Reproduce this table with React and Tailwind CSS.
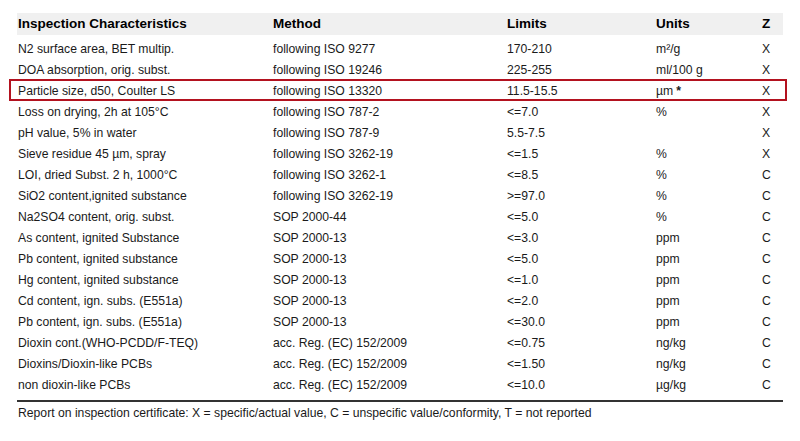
import React from 'react';

const rows = [
  ['N2 surface area, BET multip.', 'following ISO 9277', '170-210', 'm²/g', 'X'],
  ['DOA absorption, orig. subst.', 'following ISO 19246', '225-255', 'ml/100 g', 'X'],
  ['Particle size, d50, Coulter LS', 'following ISO 13320', '11.5-15.5', 'µm', 'X', true],
  ['Loss on drying, 2h at 105°C', 'following ISO 787-2', '<=7.0', '%', 'X'],
  ['pH value, 5% in water', 'following ISO 787-9', '5.5-7.5', '', 'X'],
  ['Sieve residue 45 µm, spray', 'following ISO 3262-19', '<=1.5', '%', 'X'],
  ['LOI, dried Subst. 2 h, 1000°C', 'following ISO 3262-1', '<=8.5', '%', 'C'],
  ['SiO2 content,ignited substance', 'following ISO 3262-19', '>=97.0', '%', 'C'],
  ['Na2SO4 content, orig. subst.', 'SOP 2000-44', '<=5.0', '%', 'C'],
  ['As content, ignited Substance', 'SOP 2000-13', '<=3.0', 'ppm', 'C'],
  ['Pb content, ignited substance', 'SOP 2000-13', '<=5.0', 'ppm', 'C'],
  ['Hg content, ignited substance', 'SOP 2000-13', '<=1.0', 'ppm', 'C'],
  ['Cd content, ign. subs. (E551a)', 'SOP 2000-13', '<=2.0', 'ppm', 'C'],
  ['Pb content, ign. subs. (E551a)', 'SOP 2000-13', '<=30.0', 'ppm', 'C'],
  ['Dioxin cont.(WHO-PCDD/F-TEQ)', 'acc. Reg. (EC) 152/2009', '<=0.75', 'ng/kg', 'C'],
  ['Dioxins/Dioxin-like PCBs', 'acc. Reg. (EC) 152/2009', '<=1.50', 'ng/kg', 'C'],
  ['non dioxin-like PCBs', 'acc. Reg. (EC) 152/2009', '<=10.0', 'µg/kg', 'C'],
];

const cols = 'grid grid-cols-[255px_234px_149px_106px_1fr] pl-[1px]';

const App = () => {
  return (
    <div className="w-[800px] h-[441px] bg-white pt-[13px] text-[#1a1a1a] font-['Liberation_Sans',Arial,sans-serif] overflow-hidden">
      <div className="ml-[17px] w-[766px]">
        {/* Header */}
        <div className={`${cols} h-[22px] items-center bg-[#f0f0f0] text-[13.5px] font-bold text-black`}>
          <div>Inspection Characteristics</div>
          <div>Method</div>
          <div>Limits</div>
          <div>Units</div>
          <div>Z</div>
        </div>

        {/* Rows */}
        <div className="mt-[4px]">
          {rows.map((r, i) => (
            <div key={i} className={`${cols} relative h-[21px] items-center text-[12.2px]`}>
              <div>{r[0]}</div>
              <div>{r[1]}</div>
              <div>{r[2]}</div>
              <div>
                {r[3]}
                {r[5] && <span className="ml-[3px] font-bold">*</span>}
              </div>
              <div>{r[4]}</div>
              {r[5] && (
                <span className="absolute -left-[8px] -right-[4px] -top-[2px] bottom-[1px] border-2 border-[#b3121f]" />
              )}
            </div>
          ))}
        </div>

        <div className="mt-[4px] h-[2px] bg-[#333333]" />

        <div className="pl-[1px] h-[23px] flex items-center text-[12.2px]">
          Report on inspection certificate: X = specific/actual value, C = unspecific value/conformity, T = not reported
        </div>
      </div>
    </div>
  );
};

export default App;
